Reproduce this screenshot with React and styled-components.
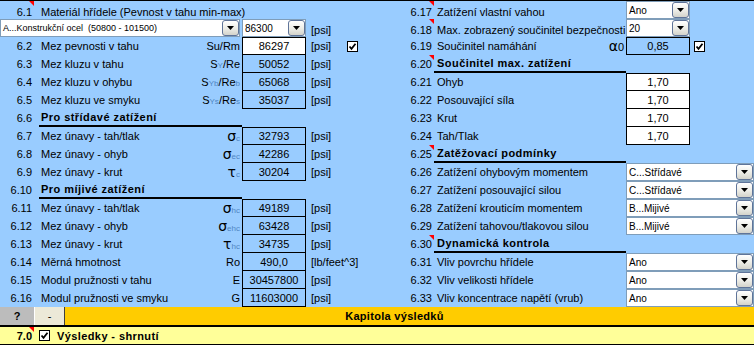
import React from 'react'
import styled, { createGlobalStyle } from 'styled-components'

const GlobalStyle = createGlobalStyle`
    body {
        margin: 0;
        font-family: 'Liberation Sans', Arial, sans-serif;
        font-size: 11px;
        color: #000;
        background: #99ccff;
    }
`

const LEFT_COLS = '34px 208px 64px 40px 31px'
const RIGHT_COLS = '57px 192px 64px 64px'

const Sheet = styled.div`
    width: 754px;
    height: 345px;
    overflow: hidden;
    display: flex;
    flex-direction: column;
    background: #99ccff;
`

const Main = styled.div`
    display: flex;
    border-top: 1px solid #000;
`

const Panel = styled.div`
    width: 377px;
    display: flex;
    flex-direction: column;
`

const Row = styled.div`
    display: grid;
    grid-template-columns: ${(p) => p.$cols};
    height: 18px;
    align-items: ${(p) => (p.$low ? 'end' : 'center')};
    white-space: nowrap;
`

const Num = styled.div`
    position: relative;
    align-self: stretch;
    display: flex;
    align-items: ${(p) => (p.$low ? 'flex-end' : 'center')};
    justify-content: flex-end;
    padding-right: 2px;
    padding-bottom: ${(p) => (p.$low ? '1px' : '0')};
`

const Marker = styled.span`
    position: absolute;
    top: 0;
    right: 0;
    width: 0;
    height: 0;
    border-left: 5px solid transparent;
    border-top: 5px solid #ff0000;
`

const Label = styled.div`
    display: flex;
    align-items: center;
    justify-content: space-between;
    padding-left: ${(p) => p.$indent}px;
    padding-right: 2px;
    padding-bottom: ${(p) => (p.$low ? '1px' : '0')};
`

const Heading = styled.div`
    align-self: stretch;
    display: flex;
    align-items: center;
    margin-left: ${(p) => p.$offset}px;
    padding-left: ${(p) => p.$indent}px;
    border-bottom: 2px solid #000;
    font-weight: bold;
    letter-spacing: 0.45px;
`

const Symbol = styled.span`
    display: inline-flex;
    align-items: baseline;
    color: #000;
`

const Greek = styled.span`
    font-family: 'DejaVu Sans', sans-serif;
    font-size: 14px;
    line-height: 12px;
`

const Sub = styled.sub`
    font-size: 8px;
    color: #4f86c4;
    vertical-align: -2px;
    line-height: 0;
`

const ValueBox = styled.div`
    align-self: stretch;
    box-sizing: border-box;
    display: flex;
    align-items: center;
    justify-content: center;
    border: 1px solid #000;
    border-top: ${(p) => (p.$first ? '1px solid #000' : 'none')};
    background: ${(p) => (p.$white ? '#fff' : 'transparent')};
`

const Unit = styled.div`
    padding-left: 5px;
    padding-bottom: ${(p) => (p.$low ? '1px' : '0')};
`

const CheckCell = styled.div`
    display: flex;
    align-items: center;
    padding-left: ${(p) => p.$pad}px;
`

const Combo = styled.div`
    grid-column: ${(p) => p.$span || 'auto'};
    align-self: stretch;
    box-sizing: border-box;
    width: ${(p) => p.$width || '100%'};
    display: flex;
    align-items: center;
    justify-content: space-between;
    background: #fff;
    border: 1px solid #7f9db9;
    padding-left: 2px;
    font-size: ${(p) => p.$size || 10}px;
    white-space: pre;
    overflow: hidden;
`

const DropButton = styled.span`
    flex: none;
    width: 17px;
    height: 16px;
    box-sizing: border-box;
    display: flex;
    align-items: center;
    justify-content: center;
    border: 1px solid #5f7499;
    border-radius: 3px;
    background: linear-gradient(#ffffff, #ecece6 55%, #d3d3cb);
`

const Toolbar = styled.div`
    display: grid;
    grid-template-columns: 34px 31px 1fr;
    height: 18px;
    border-bottom: 2px solid #000;
    font-weight: bold;
`

const HelpCell = styled.div`
    display: flex;
    align-items: center;
    justify-content: center;
    background: #bcbcbc;
`

const MinusCell = styled.div`
    display: flex;
    align-items: center;
    justify-content: center;
    background: #ece9d8;
    border-left: 1px solid #fff;
    border-right: 1px solid #404040;
    font-weight: normal;
`

const ChapterCell = styled.div`
    display: flex;
    align-items: center;
    justify-content: center;
    padding-right: 30px;
    background: #ffcc00;
    letter-spacing: 0.3px;
`

const ResultRow = styled.div`
    display: flex;
    align-items: center;
    height: 17px;
    background: #ffff99;
    border-bottom: 1px solid #000;
    font-weight: bold;
    letter-spacing: 0.4px;
`

const ResultNum = styled.div`
    position: relative;
    width: 34px;
    align-self: stretch;
    display: flex;
    align-items: center;
    justify-content: flex-end;
    padding-right: 2px;
    box-sizing: border-box;
    letter-spacing: 0;
`

const ResultCheck = styled.div`
    display: flex;
    padding: 0 7px 0 5px;
`

function Arrow() {
    return (
        <svg width="7" height="4" viewBox="0 0 7 4">
            <polygon points="0,0 7,0 3.5,4" fill="#000" />
        </svg>
    )
}

function CheckBox() {
    return (
        <svg width="11" height="11" viewBox="0 0 11 11">
            <rect x="0.5" y="0.5" width="10" height="10" fill="#fff" stroke="#000" />
            <path d="M2.5 5.5 L4.5 7.8 L8.5 2.8" fill="none" stroke="#000" strokeWidth="1.8" />
        </svg>
    )
}

function Select({ text, span, width, size }) {
    return (
        <Combo $span={span} $width={width} $size={size}>
            <span>{text}</span>
            <DropButton>
                <Arrow />
            </DropButton>
        </Combo>
    )
}

const leftRows = [
    { num: '6.2', label: 'Mez pevnosti v tahu', sym: <Symbol>Su/Rm</Symbol>, value: '86297', white: true, first: true, check: true },
    { num: '6.3', label: 'Mez kluzu v tahu', sym: <Symbol>S<Sub>Y</Sub>/Re</Symbol>, value: '50052' },
    { num: '6.4', label: 'Mez kluzu v ohybu', sym: <Symbol>S<Sub>Yb</Sub>/Re<Sub>b</Sub></Symbol>, value: '65068' },
    { num: '6.5', label: 'Mez kluzu ve smyku', sym: <Symbol>S<Sub>Ys</Sub>/Re<Sub>s</Sub></Symbol>, value: '35037' },
    { num: '6.6', heading: 'Pro střídavé zatížení' },
    { num: '6.7', label: 'Mez únavy - tah/tlak', sym: <Symbol><Greek>σ</Greek><Sub>c</Sub></Symbol>, value: '32793', first: true },
    { num: '6.8', label: 'Mez únavy - ohyb', sym: <Symbol><Greek>σ</Greek><Sub>ec</Sub></Symbol>, value: '42286' },
    { num: '6.9', label: 'Mez únavy - krut', sym: <Symbol><Greek>τ</Greek><Sub>c</Sub></Symbol>, value: '30204' },
    { num: '6.10', heading: 'Pro míjivé zatížení' },
    { num: '6.11', label: 'Mez únavy - tah/tlak', sym: <Symbol><Greek>σ</Greek><Sub>hc</Sub></Symbol>, value: '49189', first: true },
    { num: '6.12', label: 'Mez únavy - ohyb', sym: <Symbol><Greek>σ</Greek><Sub>ehc</Sub></Symbol>, value: '63428' },
    { num: '6.13', label: 'Mez únavy - krut', sym: <Symbol><Greek>τ</Greek><Sub>hc</Sub></Symbol>, value: '34735' },
    { num: '6.14', label: 'Měrná hmotnost', sym: <Symbol>Ro</Symbol>, value: '490,0', unit: '[lb/feet^3]' },
    { num: '6.15', label: 'Modul pružnosti v tahu', sym: <Symbol>E</Symbol>, value: '30457800' },
    { num: '6.16', label: 'Modul pružnosti ve smyku', sym: <Symbol>G</Symbol>, value: '11603000' },
]

const rightRows = [
    { num: '6.17', label: 'Zatížení vlastní vahou', select: 'Ano', marker: true, low: true },
    { num: '6.18', label: 'Max. zobrazený součinitel bezpečnosti', select: '20', marker: true, low: true },
    { num: '6.19', label: 'Součinitel namáhání', sym: <Symbol><Greek>α</Greek>0</Symbol>, value: '0,85', first: true, check: true },
    { num: '6.20', heading: 'Součinitel max. zatížení', marker: true },
    { num: '6.21', label: 'Ohyb', value: '1,70', white: true, first: true },
    { num: '6.22', label: 'Posouvající síla', value: '1,70', white: true },
    { num: '6.23', label: 'Krut', value: '1,70', white: true },
    { num: '6.24', label: 'Tah/Tlak', value: '1,70', white: true },
    { num: '6.25', heading: 'Zatěžovací podmínky', marker: true },
    { num: '6.26', label: 'Zatížení ohybovým momentem', wide: 'C...Střídavé' },
    { num: '6.27', label: 'Zatížení posouvající silou', wide: 'C...Střídavé' },
    { num: '6.28', label: 'Zatížení krouticím momentem', wide: 'B...Mijivé' },
    { num: '6.29', label: 'Zatížení tahovou/tlakovou silou', wide: 'B...Mijivé' },
    { num: '6.30', heading: 'Dynamická kontrola', marker: true },
    { num: '6.31', label: 'Vliv povrchu hřídele', wide: 'Ano' },
    { num: '6.32', label: 'Vliv velikosti hřídele', wide: 'Ano' },
    { num: '6.33', label: 'Vliv koncentrace napětí (vrub)', wide: 'Ano' },
]

function LeftPanel() {
    return (
        <Panel>
            <Row $cols={LEFT_COLS} $low>
                <Num $low>
                    6.1
                    <Marker />
                </Num>
                <Label $indent={7} $low>
                    Materiál hřídele (Pevnost v tahu min-max)
                </Label>
            </Row>
            <Row $cols={LEFT_COLS} $low>
                <Select text="A...Konstrukční ocel  (50800 - 101500)" span="1 / 3" width="calc(100% - 2px)" size={9} />
                <Select text="86300" />
                <Unit $low>[psi]</Unit>
            </Row>
            {leftRows.map((r) =>
                r.heading ? (
                    <Row key={r.num} $cols={LEFT_COLS}>
                        <Num>{r.num}</Num>
                        <Heading $offset={5} $indent={2}>
                            {r.heading}
                        </Heading>
                    </Row>
                ) : (
                    <Row key={r.num} $cols={LEFT_COLS}>
                        <Num>{r.num}</Num>
                        <Label $indent={7}>
                            <span>{r.label}</span>
                            {r.sym}
                        </Label>
                        <ValueBox $white={r.white} $first={r.first}>
                            {r.value}
                        </ValueBox>
                        <Unit>{r.unit || '[psi]'}</Unit>
                        {r.check && (
                            <CheckCell $pad={1}>
                                <CheckBox />
                            </CheckCell>
                        )}
                    </Row>
                )
            )}
        </Panel>
    )
}

function RightPanel() {
    return (
        <Panel>
            {rightRows.map((r) => (
                <Row key={r.num} $cols={RIGHT_COLS} $low={r.low}>
                    <Num $low={r.low}>
                        {r.num}
                        {r.marker && <Marker />}
                    </Num>
                    {r.heading ? (
                        <Heading $offset={0} $indent={3}>
                            {r.heading}
                        </Heading>
                    ) : (
                        <Label $indent={3} $low={r.low}>
                            <span>{r.label}</span>
                            {r.sym}
                        </Label>
                    )}
                    {r.select && <Select text={r.select} />}
                    {r.value && (
                        <ValueBox $white={r.white} $first={r.first}>
                            {r.value}
                        </ValueBox>
                    )}
                    {r.check && (
                        <CheckCell $pad={4}>
                            <CheckBox />
                        </CheckCell>
                    )}
                    {r.wide && <Select text={r.wide} span="3 / 5" />}
                </Row>
            ))}
        </Panel>
    )
}

export default function App() {
    return (
        <Sheet>
            <GlobalStyle />
            <Main>
                <LeftPanel />
                <RightPanel />
            </Main>
            <Toolbar>
                <HelpCell>?</HelpCell>
                <MinusCell>-</MinusCell>
                <ChapterCell>Kapitola výsledků</ChapterCell>
            </Toolbar>
            <ResultRow>
                <ResultNum>
                    7.0
                    <Marker />
                </ResultNum>
                <ResultCheck>
                    <CheckBox />
                </ResultCheck>
                Výsledky - shrnutí
            </ResultRow>
        </Sheet>
    )
}
